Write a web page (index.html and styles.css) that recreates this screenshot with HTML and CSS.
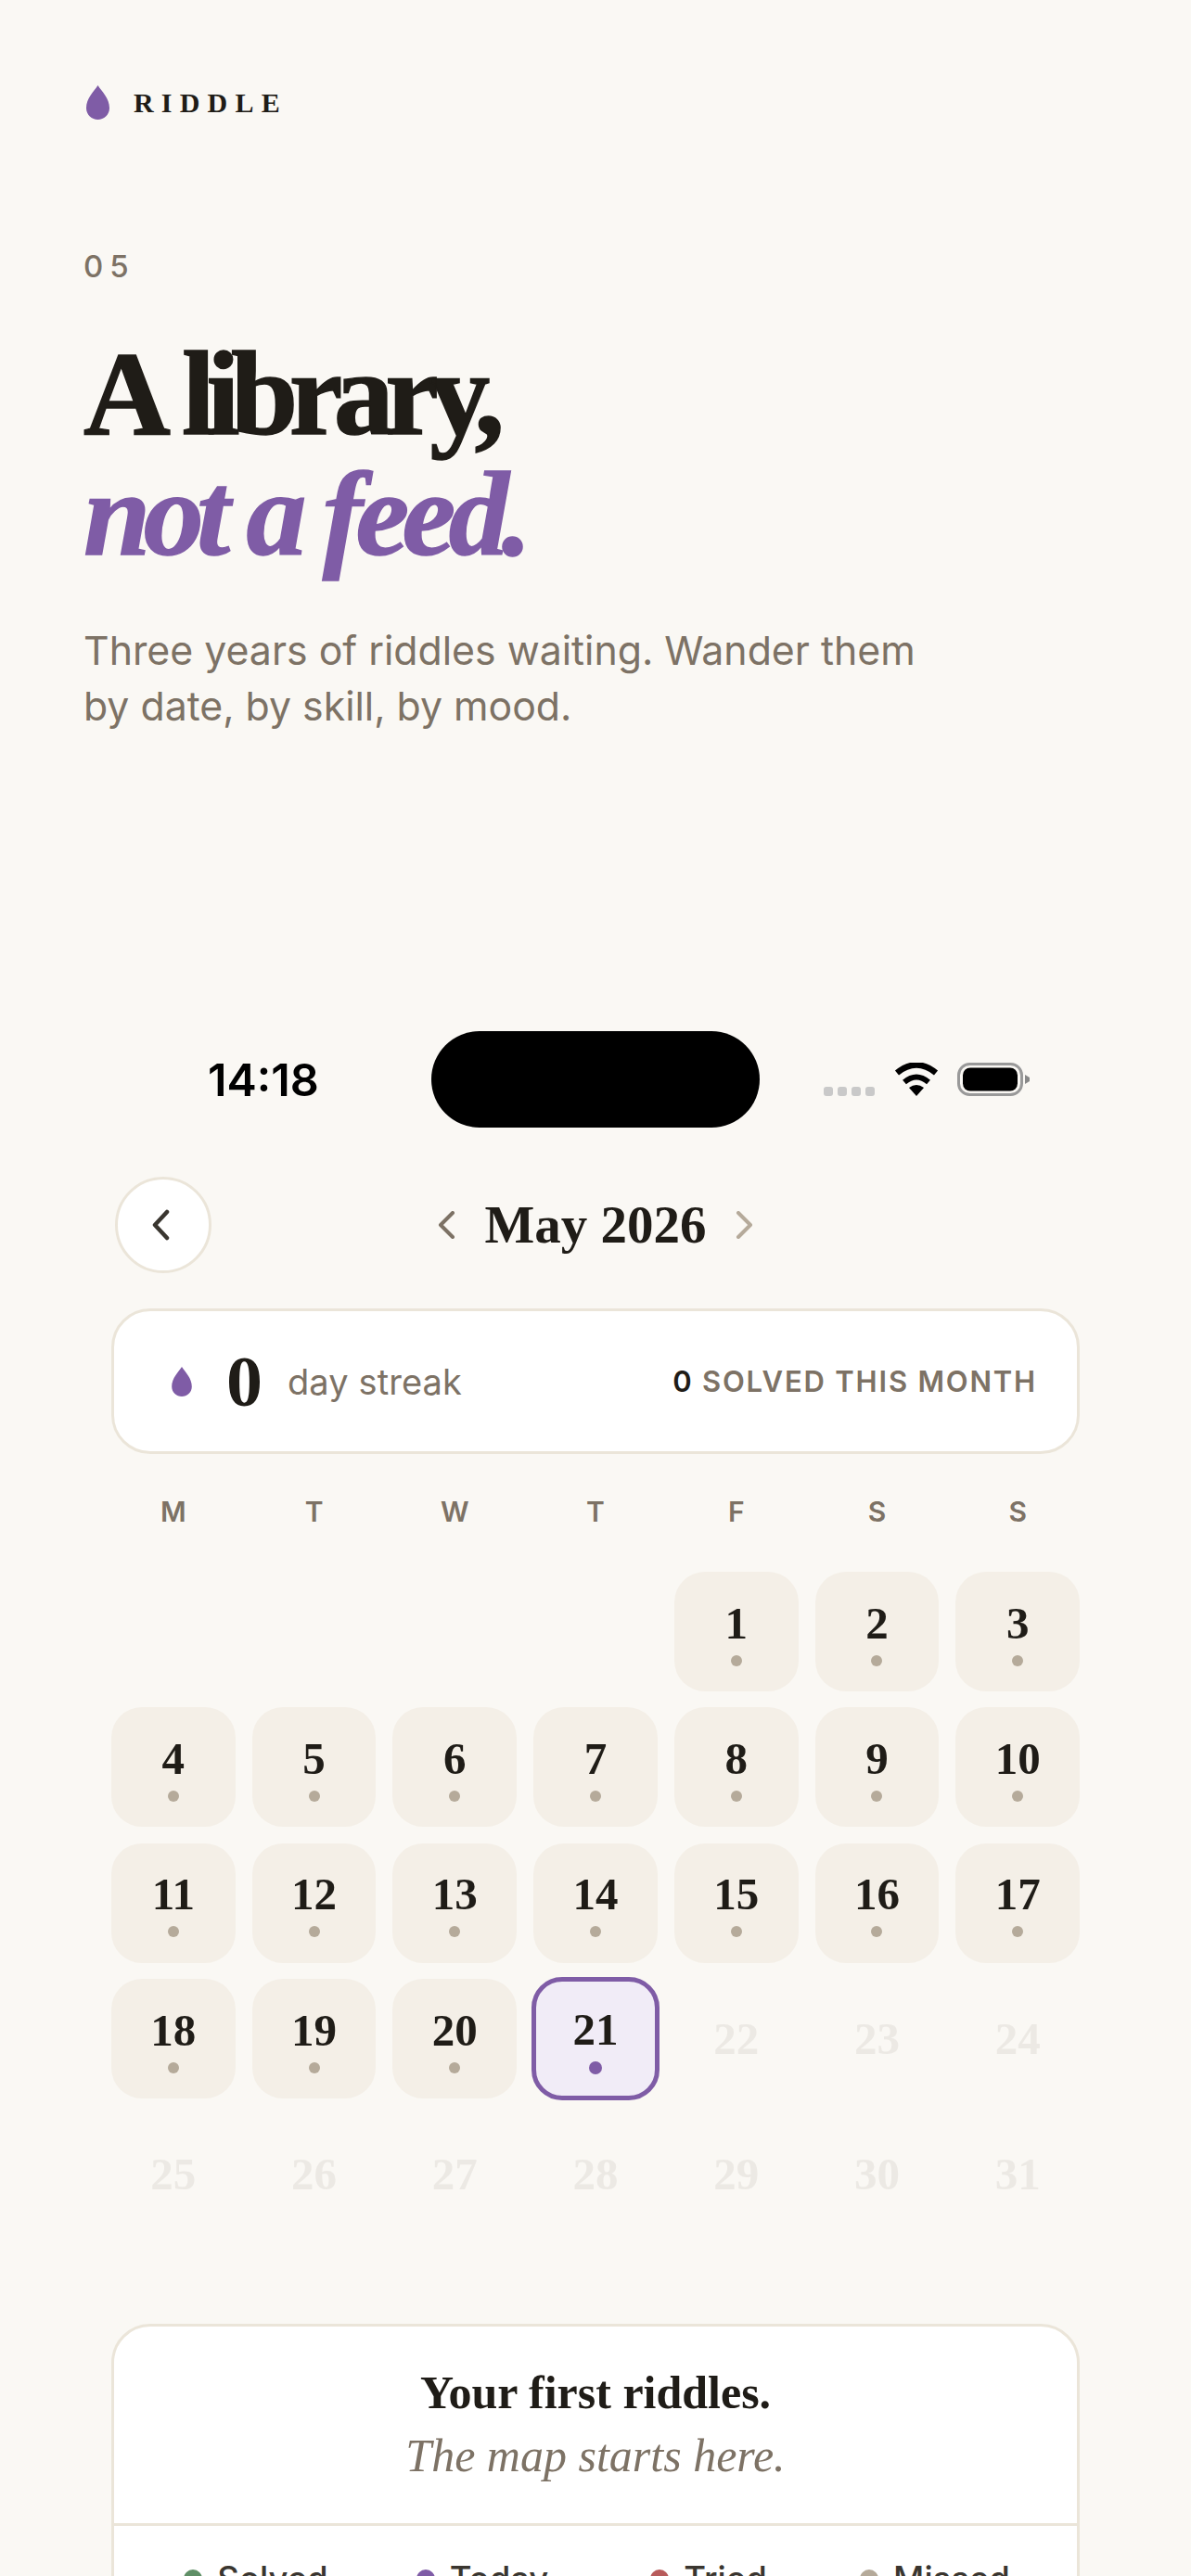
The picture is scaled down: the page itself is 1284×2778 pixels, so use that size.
FILE: index.html
```html
<!DOCTYPE html>
<html lang="en">
<head>
    <meta charset="utf-8" />
    <title>Riddle</title>
    <link rel="stylesheet" href="styles.css">
</head>
<body>
<header class="hero">
    <div class="brand">
        <svg class="drop brand-drop" viewBox="0 0 25 37"><path d="M12.5 0C17 7 25 14 25 24.5 25 32 19 37 12.5 37 6 37 0 32 0 24.5 0 14 8 7 12.5 0Z"/></svg>
        <span class="brand-name">RIDDLE</span>
    </div>
    <p class="step">05</p>
    <h1 class="headline"><span class="line-one">A library,</span><br><em>not a feed.</em></h1>
    <p class="lede">Three years of riddles waiting. Wander them<br>by date, by skill, by mood.</p>
</header>

<main class="phone">
    <div class="status">
        <span class="time">14:18</span>
        <span class="island"></span>
        <div class="status-icons">
            <span class="signal"><i></i><i></i><i></i><i></i></span>
            <svg class="wifi" viewBox="0 0 48 36"><path d="M3 11Q24-6 45 11" fill="none" stroke="#000" stroke-width="6.5"/><path d="M11 21Q24 10 37 21" fill="none" stroke="#000" stroke-width="6"/><path d="M16 27Q24 21 32 27L24 36Z"/></svg>
            <svg class="battery" viewBox="0 0 78 36"><rect x="1.5" y="1.5" width="68" height="33" rx="12" fill="none" stroke="#999" stroke-width="3"/><rect x="6" y="5.500" width="59" height="25" rx="8"/><path d="M73 13L78 16V20L73 23Z" fill="#888"/></svg>
        </div>
    </div>

    <nav class="nav">
        <button class="back">
            <svg viewBox="0 0 20 34"><path d="M17 3L4 17L17 31" fill="none" stroke="#3a3630" stroke-width="4.500" stroke-linecap="round" stroke-linejoin="round"/></svg>
        </button>
        <div class="month">
            <svg class="month-arrow" viewBox="0 0 20 30"><path d="M17 2L4 15L17 28" fill="none" stroke="#7d7265" stroke-width="4" stroke-linecap="round" stroke-linejoin="round"/></svg>
            <span class="month-name">May 2026</span>
            <svg class="month-arrow" viewBox="0 0 20 30"><path d="M3 2L16 15L3 28" fill="none" stroke="#b5aa9a" stroke-width="4" stroke-linecap="round" stroke-linejoin="round"/></svg>
        </div>
    </nav>

    <section class="streak">
        <svg class="drop streak-drop" viewBox="0 0 25 37"><path d="M12.5 0C17 7 25 14 25 24.5 25 32 19 37 12.5 37 6 37 0 32 0 24.5 0 14 8 7 12.5 0Z"/></svg>
        <span class="streak-num">0</span>
        <span class="streak-label">day streak</span>
        <span class="streak-month"><b>0</b> SOLVED THIS MONTH</span>
    </section>

    <div class="weekdays">
        <span>M</span><span>T</span><span>W</span><span>T</span><span>F</span><span>S</span><span>S</span>
    </div>

    <div class="days">
        <span></span><span></span><span></span><span></span>
        <div class="day"><b>1</b><i></i></div>
        <div class="day"><b>2</b><i></i></div>
        <div class="day"><b>3</b><i></i></div>
        <div class="day"><b>4</b><i></i></div>
        <div class="day"><b>5</b><i></i></div>
        <div class="day"><b>6</b><i></i></div>
        <div class="day"><b>7</b><i></i></div>
        <div class="day"><b>8</b><i></i></div>
        <div class="day"><b>9</b><i></i></div>
        <div class="day"><b>10</b><i></i></div>
        <div class="day"><b>11</b><i></i></div>
        <div class="day"><b>12</b><i></i></div>
        <div class="day"><b>13</b><i></i></div>
        <div class="day"><b>14</b><i></i></div>
        <div class="day"><b>15</b><i></i></div>
        <div class="day"><b>16</b><i></i></div>
        <div class="day"><b>17</b><i></i></div>
        <div class="day"><b>18</b><i></i></div>
        <div class="day"><b>19</b><i></i></div>
        <div class="day"><b>20</b><i></i></div>
        <div class="day today"><b>21</b><i></i></div>
        <div class="day future"><b>22</b></div>
        <div class="day future"><b>23</b></div>
        <div class="day future"><b>24</b></div>
        <div class="day future"><b>25</b></div>
        <div class="day future"><b>26</b></div>
        <div class="day future"><b>27</b></div>
        <div class="day future"><b>28</b></div>
        <div class="day future"><b>29</b></div>
        <div class="day future"><b>30</b></div>
        <div class="day future"><b>31</b></div>
    </div>

    <section class="first">
        <div class="first-head">
            <h2>Your first riddles.</h2>
            <p>The map starts here.</p>
        </div>
        <ul class="legend">
            <li><i class="solved"></i>Solved</li>
            <li><i class="current"></i>Today</li>
            <li><i class="tried"></i>Tried</li>
            <li><i class="missed"></i>Missed</li>
        </ul>
    </section>
</main>
</body>
</html>
```

FILE: styles.css
```css
*{margin:0;padding:0;box-sizing:border-box;}
html,body{height:2778px;overflow:hidden;}
body{background:#faf8f4;color:#1f1c17;font-family:Inter,"Liberation Sans",sans-serif;}
ul{list-style-type:none;}
i{display:block;}

.drop{display:block;fill:#7f5ca6;}

.hero{padding:92px 0 0 90px;height:1112px;}
.brand{display:flex;align-items:center;height:37px;}
.brand-drop{width:25px;height:37px;margin-left:3px;}
.brand-name{margin-left:26px;font:700 30px/37px "Liberation Serif",serif;letter-spacing:8.200px;}
.step{margin-top:138px;font-size:33px;line-height:40px;font-weight:500;letter-spacing:7px;color:#7d7265;}
.headline{margin-top:52px;font:700 130px/130px "Liberation Serif",serif;letter-spacing:-7.600px;-webkit-text-stroke:1.500px #1f1c17;}
.line-one{letter-spacing:-9.600px;word-spacing:6px;}
.headline em{color:#7f5ca6;-webkit-text-stroke:1.500px #7f5ca6;}
.lede{margin-top:53px;font-size:42.800px;line-height:60px;color:#7d7265;}

.phone{padding:0 120px;}
.status{display:grid;grid-template-columns:1fr 354px 1fr;align-items:center;height:104px;}
.time{padding:2px 0 0 104px;font-size:48.500px;line-height:60px;font-weight:600;color:#000;}
.island{height:104px;border-radius:52px;background:#000;}
.status-icons{display:flex;align-items:center;padding-left:69px;}
.signal{display:flex;gap:5px;margin-top:26px;}
.signal i{width:10px;height:10px;border-radius:3px;background:#c9c9c9;}
.wifi{display:block;width:48px;height:36px;margin-left:21px;}
.battery{display:block;width:78px;height:36px;margin-left:20px;}

.nav{display:grid;grid-template-columns:1fr auto 1fr;align-items:center;margin-top:53px;height:104px;}
.back{display:flex;align-items:center;justify-content:center;grid-column:1;width:104px;height:104px;margin-left:4px;border:3px solid #ebe5d9;border-radius:50%;background:#fff;}
.back svg{display:block;width:20px;height:34px;margin-right:6px;}
.month{display:flex;align-items:center;grid-column:2;}
.month-arrow{display:block;width:20px;height:30px;}
.month-name{margin:0 31px;font:700 57px/60px "Liberation Serif",serif;}

.streak{display:flex;align-items:center;height:157px;margin-top:38px;padding:0 43px 0 62px;border:3px solid #ebe5d9;border-radius:42px;background:#fff;}
.streak-drop{width:22px;height:32px;}
.streak-num{margin-left:37px;font:700 78px/80px "Liberation Serif",serif;}
.streak-label{margin-left:27px;font-size:38px;color:#7d7265;letter-spacing:.1px;}
.streak-month{margin-left:auto;font-size:31px;font-weight:600;letter-spacing:1.800px;color:#7d7265;}
.streak-month b{color:#1f1c17;font-weight:600;}

.weekdays{display:grid;grid-template-columns:repeat(7,1fr);column-gap:18px;margin-top:42px;}
.weekdays span{text-align:center;font-size:30px;line-height:40px;font-weight:600;color:#7d7265;}

.days{display:grid;grid-template-columns:repeat(7,1fr);grid-auto-rows:129px;gap:17.400px 18px;margin-top:45px;}
.day{display:flex;flex-direction:column;align-items:center;justify-content:center;padding-top:4px;border-radius:33px;background:#f4efe7;}
.day b{font:700 49px/48px "Liberation Serif",serif;}
.day i{width:12px;height:12px;margin-top:10px;border-radius:50%;background:#b5aa9a;}
.today{margin:-2px;border:5px solid #7f5ca6;background:#f1ecf7;}
.today i{width:14px;height:14px;background:#7f5ca6;}
.future{padding-top:0;background:none;}
.future b{color:#ece9e4;}

.first{margin-top:96px;border:3px solid #ebe5d9;border-radius:42px;background:#fff;}
.first-head{height:215px;padding-top:43px;border-bottom:3px solid #ebe5d9;text-align:center;}
.first-head h2{font:700 50px/56px "Liberation Serif",serif;}
.first-head p{margin-top:12px;font:italic 400 50px/56px "Liberation Serif",serif;color:#7d7265;}
.legend{display:grid;grid-template-columns:repeat(4,244px);justify-content:center;padding:34px 0 40px;}
.legend li{display:flex;align-items:center;justify-content:center;gap:16px;font-size:36.500px;line-height:46px;font-weight:500;color:#3a3630;}
.legend i{width:20px;height:20px;border-radius:50%;}
.solved{background:#5f8f66;}
.current{background:#7f5ca6;}
.tried{background:#b85c5c;}
.missed{background:#b5aa9a;}
```
